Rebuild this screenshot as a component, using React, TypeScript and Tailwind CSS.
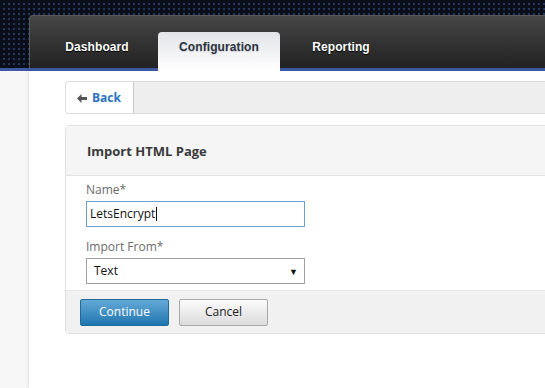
import { ReactNode } from "react";

const dots =
  "bg-[#0a0e19] bg-[image:linear-gradient(90deg,#0a0e19_3px,transparent_3px),linear-gradient(#0a0e19_3px,#26365f_3px)] bg-[size:5px_5px]";

function Tab({ label, active }: { label: string; active?: boolean }) {
  if (active) {
    return (
      <div className="relative z-10 -mb-[3px] h-[39px] w-[122px] rounded-t-[4px] bg-gradient-to-b from-[#e3e4e8] to-[#ffffff] pt-[7px] text-center text-[12px] font-bold leading-[16px] tracking-[0.1px] text-[#2f3540] [text-shadow:0_1px_1px_#c9ccd4]">
        {label}
      </div>
    );
  }
  return (
    <div className="-mb-[3px] h-[39px] w-[122px] pt-[7px] text-center text-[12px] font-bold leading-[16px] tracking-[0.1px] text-white [text-shadow:0_1px_1px_#000]">
      {label}
    </div>
  );
}

function Field({ label, children }: { label: string; children: ReactNode }) {
  return (
    <div>
      <div className="h-[20px] text-[12px] leading-[20px] text-[#6b6b6b]">{label}</div>
      <div className="mt-[1px]">{children}</div>
    </div>
  );
}

export default function App() {
  return (
    <div className="relative h-[388px] w-[545px] overflow-hidden bg-[#f7f7f7] font-['Open_Sans',sans-serif]">
      {/* top nav */}
      <div className={`flex h-[68px] pl-[29px] pt-[15px] ${dots}`}>
        <div className="flex flex-1 items-end rounded-tl-[4px] border-l border-t border-[#585858] bg-gradient-to-b from-[#464646] to-[#222222] pl-[6px] font-['Liberation_Sans',sans-serif]">
          <Tab label="Dashboard" />
          <Tab label="Configuration" active />
          <Tab label="Reporting" />
        </div>
      </div>
      <div className="h-[3px] bg-[#3e58a4]" />

      <div className="flex h-[317px]">
        <div className="w-[29px] shrink-0" />
        <div className="min-w-0 flex-1 overflow-hidden bg-white pl-[36px] pt-[10px] shadow-[-1px_0_3px_rgba(0,0,0,0.08)]">
          <div className="w-[520px]">
            {/* back bar */}
            <div className="flex h-[33px] rounded-[3px] border border-[#dddddd] bg-[#eeeeee]">
              <div className="flex w-[68px] items-center gap-[5px] rounded-l-[3px] border-r border-[#c8c8c8] bg-white pl-[11px] pt-[1px]">
                <svg width="10" height="9" viewBox="0 0 10 9">
                  <path d="M0 4.5 L4.5 0 L4.5 3 L10 3 L10 6 L4.5 6 L4.5 9 Z" fill="#555" />
                </svg>
                <span className="text-[12px] font-bold text-[#2a72c0]">Back</span>
              </div>
            </div>

            {/* panel */}
            <div className="mt-[11px] rounded-[4px] border border-[#e0e0e0]">
              <div className="flex h-[50px] items-center border-b border-[#e2e2e2] bg-[#f5f5f5] px-[21px] pt-[2px] text-[13px] font-bold text-[#3a3a3a]">
                Import HTML Page
              </div>
              <div className="bg-white px-[20px] pt-[4px] pb-[6px]">
                <Field label="Name*">
                  <div className="flex h-[26px] w-[219px] items-center border border-[#6f9fd6] px-[3px] text-[12px] text-[#111]">
                    LetsEncrypt<span className="ml-[1px] h-[14px] w-px bg-[#111]" />
                  </div>
                </Field>
                <div className="mt-[10px]">
                  <Field label="Import From*">
                    <div className="flex h-[26px] w-[219px] items-center justify-between border border-[#a0a0a0] pl-[7px] pr-[6px] text-[12px] text-[#111]">
                      <span>Text</span>
                      <span className="text-[9px] leading-none">▼</span>
                    </div>
                  </Field>
                </div>
              </div>
              <div className="flex h-[43px] items-center gap-[10px] rounded-b-[4px] border-t border-[#e6e6e6] bg-[#f1f1f1] px-[14px]">
                <button className="h-[27px] w-[89px] rounded-[2px] border border-[#1d6a9c] bg-gradient-to-b from-[#63a9d8] to-[#1c76ae] text-[12px] text-white">
                  Continue
                </button>
                <button className="h-[27px] w-[89px] rounded-[2px] border border-[#a8a8a8] bg-gradient-to-b from-[#fbfbfb] to-[#dcdcdc] text-[12px] text-[#222]">
                  Cancel
                </button>
              </div>
            </div>
          </div>
        </div>
      </div>
    </div>
  );
}
